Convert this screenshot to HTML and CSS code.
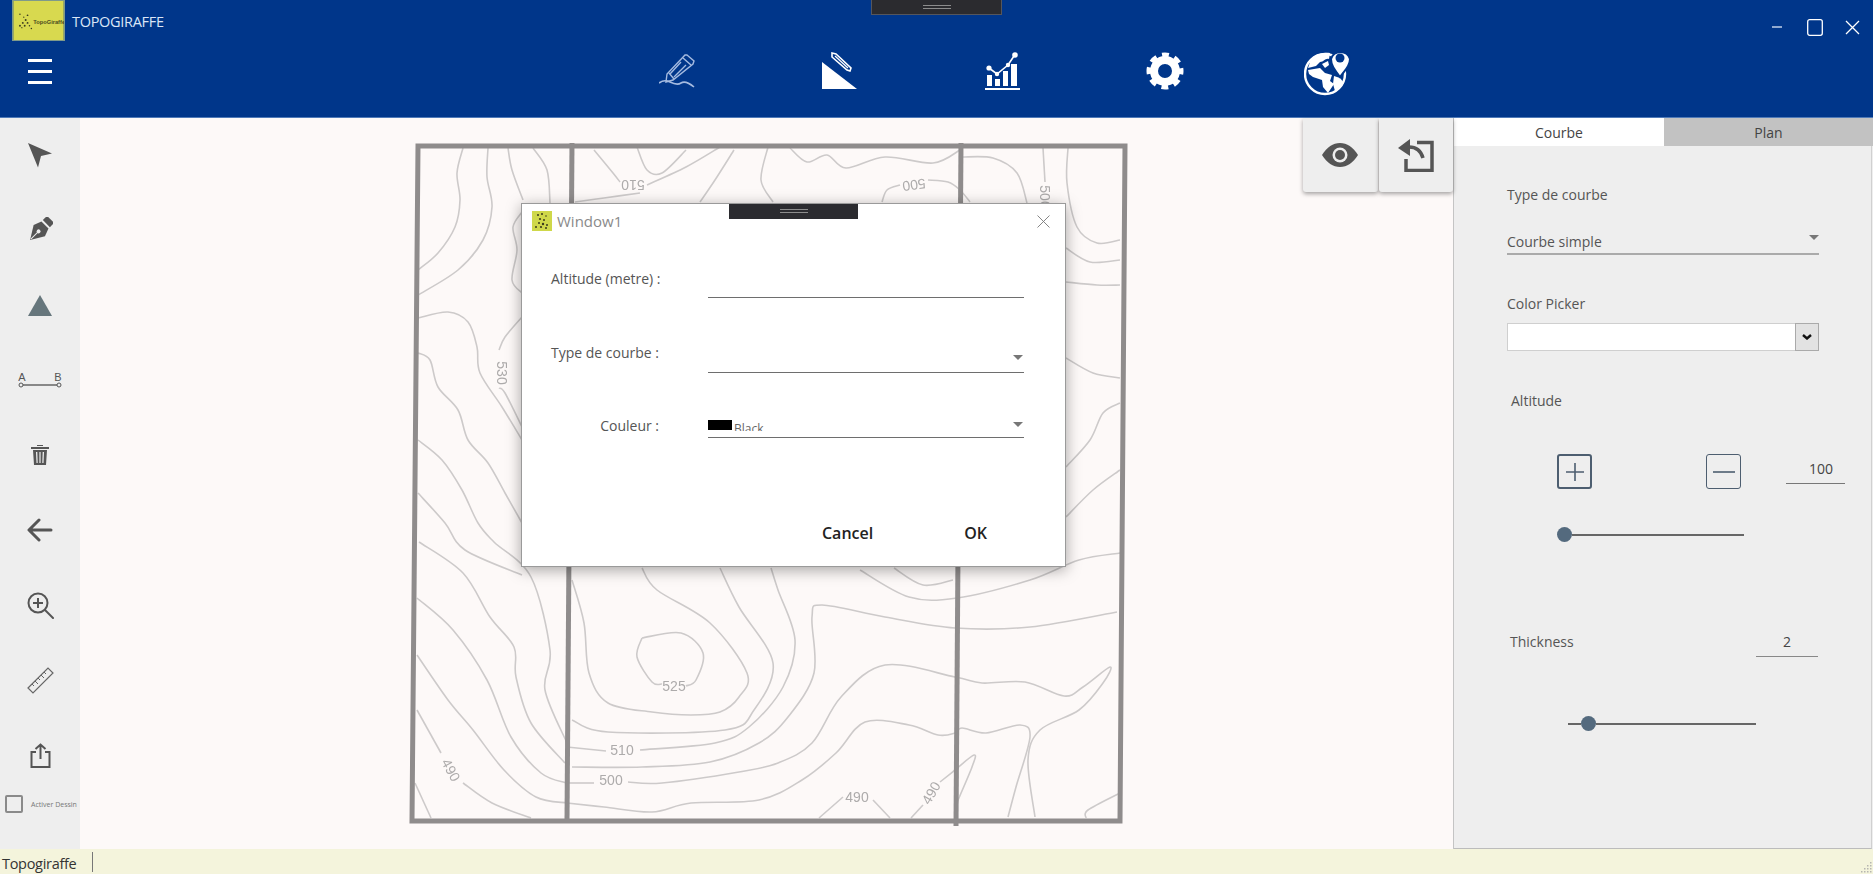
FILE: index.html
```html
<!DOCTYPE html>
<html lang="fr">
<head>
    <meta charset="UTF-8">
    <title>TOPOGIRAFFE</title>
    <link rel="stylesheet" href="styles.css">
</head>
<body>
<div class="app">
    <header class="topbar">
        <!-- debug handle -->
        <div class="handle handle-top"><span></span></div>

        <div class="title-row">
            <svg class="logo" viewBox="0 0 53 41">
                <rect width="53" height="41" fill="#d8d94f"/>
                <g fill="#3c3c20">
                    <circle cx="7" cy="14" r=".8"/><circle cx="11" cy="17" r=".7"/><circle cx="15" cy="15" r=".9"/>
                    <circle cx="13" cy="20" r="1"/><circle cx="10" cy="23" r="1"/><circle cx="15" cy="23" r="1"/>
                    <circle cx="7" cy="26" r="1"/><circle cx="12" cy="26" r="1"/><circle cx="17" cy="26" r=".8"/>
                    <circle cx="19" cy="29" r=".8"/><circle cx="9" cy="28" r=".7"/>
                </g>
                <text x="21" y="24" class="logo-text">TopoGiraffe</text>
            </svg>
            <span class="app-name">TOPOGIRAFFE</span>
            <div class="window-controls">
                <button class="win-btn">
                    <svg width="12" height="2" viewBox="0 0 12 2"><path d="M1 1h10" stroke="#dfe8f6" stroke-width="1.3"/></svg>
                </button>
                <button class="win-btn">
                    <svg width="16" height="17" viewBox="0 0 16 17"><rect x=".7" y=".7" width="14.6" height="15.6" rx="2" fill="none" stroke="#fff" stroke-width="1.3"/></svg>
                </button>
                <button class="win-btn">
                    <svg width="15" height="15" viewBox="0 0 15 15"><path d="M1 1l13 13M14 1L1 14" stroke="#fff" stroke-width="1.3"/></svg>
                </button>
            </div>
        </div>

        <div class="nav-row">
            <div class="burger"><span></span><span></span><span></span></div>
            <nav class="nav-icons">
                <a class="nav-item">
                    <svg width="36" height="34" viewBox="0 0 36 34" fill="none" stroke="#a5bbe0" stroke-width="1.4">
                        <path d="M28 1l7 6-1 3L14 26l-7 2 1-8L26 1z"/>
                        <path d="M24 4l8 7M10 19l5 6M22 8L11 20M27 11L15 23"/>
                        <path d="M0 29c4-3 7-3 11-1s8 3 11 1 7-1 13 4" stroke-width="1.6"/>
                    </svg>
                </a>
                <a class="nav-item">
                    <svg width="38" height="38" viewBox="0 0 38 38" fill="#fff">
                        <path d="M1 10l35 27H1z"/>
                        <path d="M11 1l4 1 15 14-1 3-3-1L11 5z" fill="none" stroke="#fff" stroke-width="1.6"/>
                        <path d="M14 4l13 12" stroke="#fff" stroke-width="1.2"/>
                    </svg>
                </a>
                <a class="nav-item">
                    <svg width="38" height="38" viewBox="0 0 38 38" fill="#fff">
                        <path d="M2 36h35v2H2z"/>
                        <path d="M4 23h5v11H4zM12 27h5v7h-5zM20 19h5v15h-5zM28 12h6v22h-6z"/>
                        <path d="M6 16l8 6 11-9 6-9" fill="none" stroke="#fff" stroke-width="1.6"/>
                        <circle cx="6" cy="16" r="2.6"/><circle cx="14" cy="22" r="2.2"/><circle cx="25" cy="13" r="2.2"/><circle cx="32" cy="3" r="2.8"/>
                    </svg>
                </a>
                <a class="nav-item">
                    <svg width="38" height="38" viewBox="0 0 38 38" fill="none" stroke="#fff">
                        <circle cx="19" cy="19" r="11" stroke-width="8"/>
                        <circle cx="19" cy="19" r="15.5" stroke-width="6" stroke-dasharray="6.6 5.57" stroke-dashoffset="3.3"/>
                    </svg>
                </a>
                <a class="nav-item">
                    <svg width="47" height="50" viewBox="0 0 47 50">
                        <circle cx="21" cy="28" r="20" fill="none" stroke="#fff" stroke-width="2.4"/>
                        <g fill="#fff">
                            <path d="M7 13c5-5 12-7 19-6l-1 6c-4-1-5 3-9 3l-4 4-8 2z"/>
                            <path d="M4 24l12-2 5 5 7 2-2 6 4 3-6 9-5-6-1-7-9-3-4-3z"/>
                            <path d="M30 30l6 2 4 5-9 8-2-7z"/>
                            <path d="M18 18l6-3 1 4-4 3z"/>
                        </g>
                        <path d="M36 31c-6-8-9-12-9-18a10 10 0 0 1 19 0c0 6-4 10-10 18z" fill="#fff" stroke="#00368a" stroke-width="2"/>
                        <circle cx="36" cy="12" r="4.5" fill="#00368a"/>
                    </svg>
                </a>
            </nav>
        </div>
    </header>

    <div class="workspace">
        <aside class="toolbar">
            <button class="tool">
                <svg width="26" height="26" viewBox="0 0 26 26"><path d="M1 1l24 10.500-11 2.500-3 11.500z" fill="#555"/></svg>
            </button>
            <button class="tool">
                <svg width="26" height="26" viewBox="0 0 26 26">
                    <g transform="rotate(45 13 13)">
                        <rect x="8" y="-2" width="10" height="6" fill="#555"/>
                        <path d="M8 6h10l3 8-8 13-8-13z" fill="#555"/>
                        <circle cx="13" cy="15" r="2" fill="#eee"/>
                        <path d="M13 16v10" stroke="#eee"/>
                    </g>
                </svg>
            </button>
            <button class="tool">
                <svg width="26" height="22" viewBox="0 0 26 22"><path d="M13 1l12 21H1z" fill="#66767c"/></svg>
            </button>
            <button class="tool">
                <svg width="44" height="18" viewBox="0 0 44 18">
                    <text x="4" y="10" class="ab-text">A</text>
                    <text x="40" y="10" class="ab-text">B</text>
                    <path d="M5 14h34" stroke="#666" stroke-width="1.6"/>
                    <circle cx="3" cy="14" r="2" fill="none" stroke="#555"/>
                    <circle cx="41" cy="14" r="2" fill="none" stroke="#555"/>
                </svg>
            </button>
            <button class="tool">
                <svg width="18" height="22" viewBox="0 0 18 22" fill="#555">
                    <path d="M6 1h6v1H6zM0 3h18v2H0z"/>
                    <path d="M2 6h14l-1 15H3zM5 8l.5 11h1.200L6.300 8zM8.400 8v11h1.200V8zM11.700 8l-.4 11h1.200L13 8z" fill-rule="evenodd"/>
                </svg>
            </button>
            <button class="tool">
                <svg width="26" height="26" viewBox="0 0 26 26" fill="none" stroke="#555" stroke-width="3" stroke-linecap="round" stroke-linejoin="round"><path d="M24 13H3M12 3L2 13l10 10"/></svg>
            </button>
            <button class="tool">
                <svg width="27" height="27" viewBox="0 0 27 27" fill="none" stroke="#555" stroke-width="2">
                    <circle cx="11" cy="11" r="9.500"/>
                    <path d="M11 6v10M6 11h10"/>
                    <path d="M18 18l8 8" stroke-linecap="round"/>
                </svg>
            </button>
            <button class="tool">
                <svg width="27" height="27" viewBox="0 0 27 27" fill="none" stroke="#666" stroke-width="1.200">
                    <path d="M1 21L21 1l5 5L6 26z"/>
                    <path d="M5 17l2 2M8 14l3 3M11 11l2 2M14 8l3 3M17 5l2 2" stroke-width="1"/>
                </svg>
            </button>
            <button class="tool">
                <svg width="21" height="25" viewBox="0 0 21 25" fill="none" stroke="#555" stroke-width="2">
                    <path d="M6 9H1.500v15h18V9H15"/>
                    <path d="M10.500 16V1.500M5.500 6l5-4.500 5 4.500"/>
                </svg>
            </button>
            <label class="draw-toggle">
                <span class="checkbox"></span>
                <span>Activer Dessin</span>
            </label>
        </aside>

        <main class="canvas">
            <svg class="map" id="map" width="1373" height="731" viewBox="80 118 1373 731">
                <g id="contours" fill="none" stroke="#cdcaca" stroke-width="1.600"></g>
                <g class="map-labels">
                    <text transform="translate(633 185) rotate(180)">510</text>
                    <text transform="translate(914 185) rotate(172)">500</text>
                    <text transform="translate(1045 197) rotate(90)">500</text>
                    <text transform="translate(502 373) rotate(90)">530</text>
                    <text transform="translate(674 686)">525</text>
                    <text transform="translate(622 750)">510</text>
                    <text transform="translate(611 780)">500</text>
                    <text transform="translate(857 797)">490</text>
                    <text transform="translate(931 793) rotate(-60)">490</text>
                    <text transform="translate(451 770) rotate(62)">490</text>
                </g>
                <g fill="none" stroke="#8f8c8c" stroke-width="5">
                    <path d="M418 146L1125 146L1120 821L412 821z"/>
                    <path d="M572 143L567 821"/>
                    <path d="M961 143L956 826"/>
                </g>
            </svg>

            <div class="view-tools">
                <button class="view-btn">
                    <svg width="36" height="24" viewBox="0 0 36 24">
                        <path d="M0 12C5 4 11 0 18 0s13 4 18 12c-5 8-11 12-18 12S5 20 0 12z" fill="#555"/>
                        <circle cx="18" cy="12" r="7.500" fill="#eee"/>
                        <circle cx="18" cy="12" r="5" fill="#555"/>
                    </svg>
                </button>
                <button class="view-btn">
                    <svg width="36" height="33" viewBox="0 0 36 33" fill="#555">
                        <path d="M19 3.500h15v28H8V20" fill="none" stroke="#555" stroke-width="3.500"/>
                        <path d="M0 9L12 0v17z"/>
                        <path d="M11 8c8 0 12 4 14 11" fill="none" stroke="#555" stroke-width="3.500"/>
                    </svg>
                </button>
            </div>

            <div class="dialog">
                <div class="handle handle-dialog"><span></span></div>
                <div class="dialog-title">
                    <svg class="dialog-logo" viewBox="0 0 20 20">
                        <rect width="20" height="20" fill="#cfd84a"/>
                        <g fill="#3a3a1c">
                            <circle cx="6" cy="4" r="1"/><circle cx="10" cy="3" r="1"/><circle cx="14" cy="5" r=".8"/>
                            <circle cx="8" cy="8" r="1.100"/><circle cx="12" cy="9" r="1"/><circle cx="7" cy="12" r="1"/>
                            <circle cx="11" cy="13" r="1.200"/><circle cx="15" cy="14" r="1"/><circle cx="4" cy="16" r="1"/>
                            <circle cx="9" cy="16" r="1.100"/><circle cx="14" cy="17" r="1"/>
                        </g>
                    </svg>
                    <span>Window1</span>
                    <svg class="dialog-close" width="13" height="13" viewBox="0 0 13 13"><path d="M.5.500l12 12M12.500.500l-12 12" stroke="#777" stroke-width=".9"/></svg>
                </div>
                <div class="dialog-form">
                    <label class="form-label label-alt">Altitude (metre) :</label>
                    <div class="form-field"></div>
                    <label class="form-label label-type">Type de courbe :</label>
                    <div class="form-field"><span class="caret caret-type"></span></div>
                    <label class="form-label label-color">Couleur :</label>
                    <div class="form-field">
                        <div class="color-value"><span class="swatch"></span><span class="color-name">Black</span></div>
                        <span class="caret caret-color"></span>
                    </div>
                </div>
                <div class="dialog-actions">
                    <button class="dlg-btn">Cancel</button>
                    <button class="dlg-btn">OK</button>
                </div>
            </div>
        </main>

        <aside class="panel">
            <div class="tabs">
                <div class="tab active">Courbe</div>
                <div class="tab">Plan</div>
            </div>
            <div class="panel-body">
                <div class="p-label first">Type de courbe</div>
                <div class="p-select"><span>Courbe simple</span><span class="caret"></span></div>

                <div class="p-label picker-label">Color Picker</div>
                <div class="color-picker">
                    <div class="color-picker-value"></div>
                    <div class="color-picker-btn">
                        <svg width="10" height="6" viewBox="0 0 10 6"><path d="M1 1l4 3.500L9 1" fill="none" stroke="#111" stroke-width="2.400"/></svg>
                    </div>
                </div>

                <div class="p-label altitude-label">Altitude</div>
                <div class="altitude-row">
                    <button class="step-btn step-plus">
                        <svg width="20" height="20" viewBox="0 0 20 20"><path d="M10 1v18M1 10h18" stroke="#4d5e70" stroke-width="1.600"/></svg>
                    </button>
                    <button class="step-btn step-minus">
                        <svg width="22" height="4" viewBox="0 0 22 4"><path d="M0 2h22" stroke="#4d5e70" stroke-width="1.600"/></svg>
                    </button>
                    <div class="num-value num-altitude">100</div>
                </div>
                <div class="slider slider-altitude">
                    <span class="slider-knob"></span><span class="slider-track"></span>
                </div>

                <div class="thickness-row">
                    <span class="p-label">Thickness</span>
                    <div class="num-value num-thickness">2</div>
                </div>
                <div class="slider slider-thickness">
                    <span class="slider-track" style="flex: 0 0 13px"></span><span class="slider-knob"></span><span class="slider-track"></span>
                </div>
            </div>
        </aside>
    </div>

    <footer class="statusbar">
        <div class="status-text">Topogiraffe</div>
        <div class="status-sep"></div>
        <svg class="grip" width="14" height="14" viewBox="0 0 14 14" fill="#b5b5b0">
            <rect x="11" y="2" width="1.500" height="1.500"/><rect x="8" y="5" width="1.500" height="1.500"/><rect x="11" y="5" width="1.500" height="1.500"/>
            <rect x="5" y="8" width="1.500" height="1.500"/><rect x="8" y="8" width="1.500" height="1.500"/><rect x="11" y="8" width="1.500" height="1.500"/>
            <rect x="2" y="11" width="1.500" height="1.500"/><rect x="5" y="11" width="1.500" height="1.500"/><rect x="8" y="11" width="1.500" height="1.500"/><rect x="11" y="11" width="1.500" height="1.500"/>
        </svg>
    </footer>
</div>
<script src="map.js"></script>
</body>
</html>
```

FILE: styles.css
```css
/* Base */
* {
    box-sizing: border-box;
}

body {
    margin: 0;
    font-family: "Open Sans", "Liberation Sans", sans-serif;
    font-size: 14px;
    color: #555;
    background-color: #fff;
    overflow: hidden;
}

button {
    padding: 0;
    border: none;
    background: none;
    font: inherit;
    color: inherit;
    cursor: pointer;
}

.app {
    display: flex;
    flex-direction: column;
    width: 1873px;
    height: 874px;
}

/* Top bar */
.topbar {
    position: relative;
    flex: 0 0 118px;
    background-color: #00368a;
    border-bottom: 1px solid #4f7ab8;
}

.handle {
    position: absolute;
    display: flex;
    align-items: center;
    justify-content: center;
    top: 0;
    height: 15px;
    width: 131px;
    background-color: #2b2b2f;
    border: 1px solid #55565c;
    border-top: none;
    z-index: 5;
}

.handle span {
    width: 28px;
    height: 4px;
    border-top: 1px solid #8c8c8c;
    border-bottom: 1px solid #8c8c8c;
}

.handle-top {
    left: 871px;
}

.handle-dialog {
    left: 207px;
    width: 129px;
    border-color: #2b2b2f;
}

.title-row {
    display: flex;
    align-items: center;
    height: 42px;
    padding-left: 12px;
}

.logo {
    width: 53px;
    height: 41px;
    border: 1px solid #7f9a8a;
    margin-top: -1px;
}

.logo-text {
    font-family: "Liberation Sans", sans-serif;
    font-size: 6px;
    font-weight: bold;
    fill: #4a4a20;
}

.app-name {
    margin-left: 7px;
    color: #dbe6f7;
    font-size: 14.5px;
    letter-spacing: -0.3px;
}

.window-controls {
    display: flex;
    margin-left: auto;
    margin-right: 2px;
    margin-top: 12px;
}

.win-btn {
    display: flex;
    align-items: center;
    justify-content: center;
    width: 37.5px;
    height: 30px;
}

.nav-row {
    display: flex;
    align-items: flex-start;
    padding: 4px 0 0 28px;
}

.burger {
    display: flex;
    flex-direction: column;
    gap: 8px;
    width: 24px;
    margin-top: 13px;
}

.burger span {
    height: 3px;
    background-color: #fff;
}

.nav-icons {
    display: flex;
    margin-left: 544px;
}

.nav-item {
    display: flex;
    align-items: center;
    justify-content: center;
    width: 162.5px;
    height: 50px;
}

/* Workspace */
.workspace {
    flex: 1;
    display: flex;
    min-height: 0;
}

.toolbar {
    flex: 0 0 80px;
    display: flex;
    flex-direction: column;
    gap: 5px;
    padding-top: 2px;
    background-color: #eeeeee;
}

.tool {
    display: flex;
    align-items: center;
    justify-content: center;
    height: 70px;
}

.ab-text {
    font-family: "Liberation Sans", sans-serif;
    font-size: 11px;
    fill: #555;
    text-anchor: middle;
}

.draw-toggle {
    display: flex;
    align-items: center;
    height: 18px;
    padding-left: 5px;
    gap: 8px;
    font-size: 7px;
    color: #777;
    white-space: nowrap;
}

.checkbox {
    flex: 0 0 18px;
    height: 18px;
    border: 2px solid #8a8a8a;
    border-radius: 2px;
}

/* Map */
.canvas {
    position: relative;
    flex: 1;
    background-color: #fdf9f8;
}

.map {
    position: absolute;
    left: 0;
    top: 0;
    filter: blur(0.7px);
}

.map-labels text {
    font-family: "Liberation Sans", sans-serif;
    font-size: 14px;
    fill: #adabab;
    text-anchor: middle;
    dominant-baseline: central;
}

.view-tools {
    position: absolute;
    top: 0;
    right: 0;
    display: flex;
    gap: 1px;
}

.view-btn {
    display: flex;
    align-items: center;
    justify-content: center;
    width: 74.5px;
    height: 74px;
    background-color: #eeeeee;
    border-radius: 0 0 3px 3px;
    box-shadow: 0 2px 4px rgba(0, 0, 0, 0.35);
}

/* Dialog */
.dialog {
    position: absolute;
    left: 441px;
    top: 85px;
    width: 545px;
    height: 364px;
    background-color: #fff;
    border: 1px solid #9a9a9a;
    box-shadow: 0 3px 14px rgba(0, 0, 0, 0.35);
}

.dialog-title {
    display: flex;
    align-items: center;
    height: 28px;
    padding: 6px 15px 0 10px;
    color: #8a8a8a;
    font-size: 15px;
}

.dialog-logo {
    width: 20px;
    height: 20px;
    margin-right: 5px;
}

.dialog-close {
    margin-left: auto;
}

.dialog-form {
    display: grid;
    grid-template-columns: 157px 316px;
    grid-template-rows: 66px 75px 65px;
    padding-left: 29px;
}

.form-label {
    align-self: end;
    height: 20px;
    line-height: 20px;
    font-size: 14px;
    color: #555;
    white-space: nowrap;
}

.label-alt {
    margin-bottom: 9px;
}

.label-type {
    margin-bottom: 10px;
}

.label-color {
    justify-self: end;
    margin: 0 49px 2px 0;
}

.form-field {
    position: relative;
    align-self: end;
    display: flex;
    height: 30px;
    border-bottom: 1.5px solid #6e6e6e;
}

.caret {
    display: block;
    width: 0;
    height: 0;
    border-left: 5px solid transparent;
    border-right: 5px solid transparent;
    border-top: 5.5px solid #777;
}

.caret-type,
.caret-color {
    position: absolute;
    right: 1px;
}

.caret-type {
    top: 12px;
}

.caret-color {
    top: 14px;
}

.color-value {
    display: flex;
    align-items: flex-start;
    height: 11px;
    margin-top: 12px;
    overflow: hidden;
}

.swatch {
    width: 24px;
    height: 10px;
    background-color: #000;
}

.color-name {
    margin-left: 2px;
    margin-top: 2px;
    font-size: 12px;
    line-height: 14px;
    color: #666;
}

.dialog-actions {
    display: flex;
    gap: 91px;
    justify-content: flex-end;
    align-items: center;
    height: 24px;
    margin-top: 83px;
    padding-right: 78px;
}

.dlg-btn {
    font-size: 16px;
    font-weight: 600;
    color: #222;
}

/* Right panel */
.panel {
    flex: 0 0 420px;
    min-width: 0;
    display: flex;
    flex-direction: column;
    background-color: #eeeeee;
    border-left: 1px solid #c4c4c4;
}

.tabs {
    display: flex;
    flex: 0 0 28px;
}

.tab {
    display: flex;
    align-items: center;
    justify-content: center;
    flex: 0 0 210px;
    background-color: #c2c2c2;
    color: #444;
    font-size: 14px;
}

.tab:last-child {
    flex: 1;
}

.tab.active {
    background-color: #fff;
}

.panel-body {
    flex: 1;
    padding: 0 52px 0 53px;
    border-right: 1px solid #d0d0d0;
    border-bottom: 1px solid #bcbcbc;
    margin-right: 1px;
}

.p-label {
    height: 20px;
    line-height: 20px;
    font-size: 14px;
    color: #555;
}

.first {
    margin-top: 39px;
}

.p-select {
    display: flex;
    align-items: center;
    justify-content: space-between;
    height: 26px;
    margin-top: 24px;
    padding-right: 0;
    border-bottom: 2px solid #aaaaaa;
}

.p-select .caret {
    margin-top: -7px;
}

.picker-label {
    margin-top: 39px;
}

.color-picker {
    display: flex;
    height: 28px;
    margin-top: 9px;
    border: 1px solid #cfcfcf;
}

.color-picker-value {
    flex: 1;
    background-color: #fff;
}

.color-picker-btn {
    display: flex;
    align-items: center;
    justify-content: center;
    width: 24px;
    background-color: #e2e2e2;
    border: 1px solid #aaaaaa;
    margin: -1px;
}

.altitude-label {
    margin: 40px 0 0 4px;
}

.altitude-row {
    display: flex;
    align-items: flex-start;
    margin: 43px -26px 0 50px;
}

.step-btn {
    display: flex;
    align-items: center;
    justify-content: center;
    width: 35px;
    height: 35px;
    border-radius: 3px;
}

.step-plus {
    border: 2px solid #4d5e70;
}

.step-minus {
    margin-left: 114px;
    border: 1px solid #4d5e70;
}

.num-value {
    height: 30px;
    line-height: 29px;
    font-size: 14px;
    color: #444;
    border-bottom: 1px solid #777;
}

.num-altitude {
    width: 59px;
    margin-left: 45px;
    padding-right: 12px;
    text-align: right;
}

.slider {
    display: flex;
    align-items: center;
    height: 15px;
}

.slider-track {
    flex: 1;
    height: 2px;
    background-color: #666;
}

.slider-knob {
    flex: 0 0 15px;
    height: 15px;
    border-radius: 50%;
    background-color: #546a7e;
}

.slider-altitude {
    width: 187px;
    margin: 38px 0 0 50px;
}

.thickness-row {
    display: flex;
    align-items: center;
    justify-content: space-between;
    height: 30px;
    margin: 85px 1px 0 3px;
}

.num-thickness {
    width: 62px;
    text-align: center;
    border-bottom-color: #888;
}

.slider-thickness {
    width: 188px;
    margin: 59px 0 0 61px;
}

/* Status bar */
.statusbar {
    position: relative;
    flex: 0 0 25px;
    display: flex;
    background-color: #f4f4dc;
}

.status-text {
    width: 78px;
    height: 22px;
    margin: 3px 0 0 2px;
    line-height: 23px;
    font-size: 14.5px;
    letter-spacing: -0.3px;
    color: #333;
    white-space: nowrap;
}

.status-sep {
    width: 1px;
    height: 20px;
    margin: 3px 0 0 12px;
    background-color: #777;
}

.grip {
    margin-left: auto;
    margin-top: 11px;
}
```

FILE: map.js
```js
// contour lines of the scanned map, page coordinates
const contourLines = [
    [[463,148],[457,173],[460,200],[455,227],[438,253],[418,270]],
    [[488,148],[487,177],[492,207],[483,240],[458,270],[418,295]],
    [[508,148],[512,170],[523,200]],
    [[533,148],[547,170],[550,203]],
    [[522,212],[513,227],[517,250],[512,280],[522,293]],
    [[418,318],[448,312],[468,322],[477,347],[480,373],[502,407],[522,440]],
    [[522,317],[505,337],[499,350]],
    [[499,388],[505,393],[522,427]],
    [[418,353],[430,360],[438,387],[458,410],[468,440],[488,463],[505,493],[522,523]],
    [[418,440],[442,460],[462,490],[478,523],[494,542],[531,577],[550,650],[545,690],[567,743]],
    [[418,493],[445,523],[465,550],[522,575]],
    [[419,542],[463,573],[490,617],[514,647],[516,677],[531,723],[565,763]],
    [[417,598],[453,630],[487,680],[511,737],[541,773],[567,783]],
    [[417,655],[448,700],[473,730],[504,770],[536,797],[567,803]],
    [[417,710],[441,753]],
    [[463,783],[492,803],[531,818]],
    [[415,783],[431,818]],

    // between the two middle lines, top
    [[594,150],[613,173],[620,182]],
    [[647,185],[686,167],[720,147]],
    [[637,147],[647,170],[662,173],[686,150]],
    [[734,150],[715,180],[700,202]],
    [[575,202],[604,198],[640,193]],
    [[768,147],[761,180],[773,202]],
    [[790,148],[807,162],[827,155],[846,168],[885,157],[933,163],[960,150]],
    [[882,202],[887,190],[900,185]],
    [[928,180],[948,182],[960,190],[970,202]],

    // right side
    [[962,157],[993,158],[1017,173],[1027,203]],
    [[1043,148],[1045,182]],
    [[1068,148],[1067,183],[1077,227],[1097,243],[1120,240]],
    [[1066,248],[1090,262],[1120,260]],
    [[1066,282],[1097,285],[1120,285]],
    [[1066,358],[1093,373],[1120,378]],
    [[1066,467],[1090,440],[1103,413],[1120,403]],
    [[1066,517],[1093,490],[1120,470]],

    // below the dialog
    [[642,638],[681,633],[703,653],[696,680],[686,686]],
    [[662,684],[652,682],[637,657],[642,638]],
    [[642,568],[657,590],[710,623],[747,673],[739,697],[720,712],[691,715],[652,712],[608,703],[589,673],[584,623],[572,580]],
    [[720,568],[739,607],[773,663],[754,710],[725,730],[608,732],[572,720]],
    [[567,747],[606,751]],
    [[640,750],[715,743],[749,727],[783,687],[795,640],[778,590],[771,568]],
    [[572,767],[642,767],[710,762],[759,743],[788,717],[814,673],[812,617],[822,605],[885,617],[955,628],[1030,627],[1117,612]],
    [[567,783],[594,783]],
    [[628,782],[662,783],[739,772],[778,763],[812,743],[841,697],[885,665],[955,677],[982,683],[1025,682],[1064,696],[1083,687],[1110,667],[1103,683],[1079,710],[1040,730],[1028,760],[1035,817]],
    [[567,803],[604,807],[652,812],[691,803],[759,800],[802,780],[836,753],[865,722],[909,725],[938,735],[955,733],[962,728],[986,733],[1020,725],[1030,737],[1016,787],[1008,817]],
    [[1120,553],[1079,560],[1030,580],[957,598],[909,597],[860,570]],
    [[953,580],[923,585],[894,568]],
    [[1120,793],[1088,810],[1086,818]],
    [[819,818],[843,797]],
    [[873,800],[890,818]],
    [[911,818],[923,805]],
    [[940,782],[955,770],[974,755],[972,767],[955,807]]
];

// catmull-rom through the points
function smoothPath(pts) {
    let d = `M${pts[0][0]} ${pts[0][1]}`;
    for (let i = 0; i < pts.length - 1; i++) {
        const p0 = pts[i - 1] || pts[i];
        const p1 = pts[i];
        const p2 = pts[i + 1];
        const p3 = pts[i + 2] || p2;
        const c1x = p1[0] + (p2[0] - p0[0]) / 6;
        const c1y = p1[1] + (p2[1] - p0[1]) / 6;
        const c2x = p2[0] - (p3[0] - p1[0]) / 6;
        const c2y = p2[1] - (p3[1] - p1[1]) / 6;
        d += `C${c1x} ${c1y} ${c2x} ${c2y} ${p2[0]} ${p2[1]}`;
    }
    return d;
}

const group = document.getElementById("contours");
contourLines.forEach((line) => {
    const path = document.createElementNS("http://www.w3.org/2000/svg", "path");
    path.setAttribute("d", smoothPath(line));
    group.appendChild(path);
});
```
